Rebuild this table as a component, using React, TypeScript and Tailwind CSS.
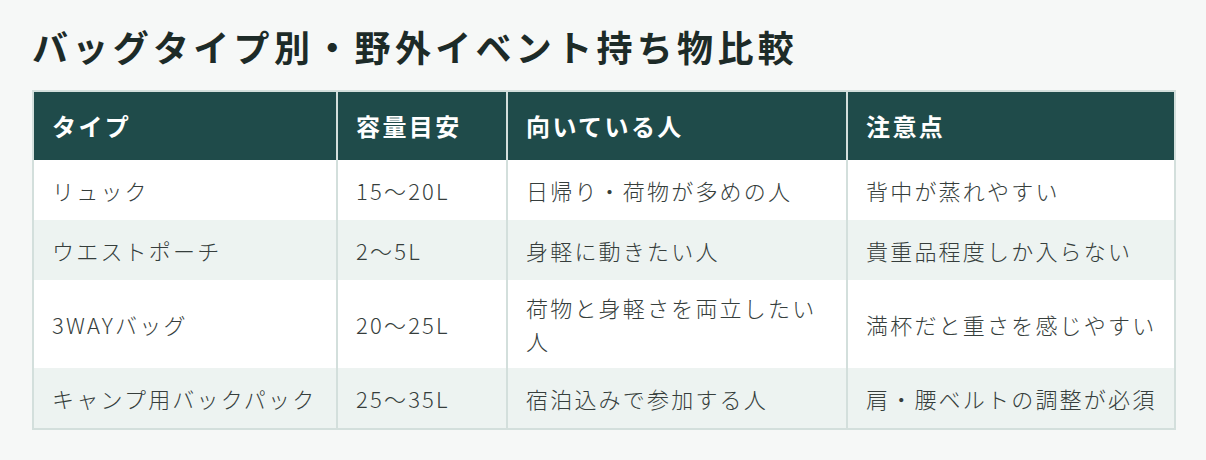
import React from 'react';

interface Row {
  type: string;
  volume: string;
  forWhom: string;
  caution: string;
}

const headers = ['タイプ', '容量目安', '向いている人', '注意点'];

const rows: Row[] = [
  { type: 'リュック', volume: '15〜20L', forWhom: '日帰り・荷物が多めの人', caution: '背中が蒸れやすい' },
  { type: 'ウエストポーチ', volume: '2〜5L', forWhom: '身軽に動きたい人', caution: '貴重品程度しか入らない' },
  { type: '3WAYバッグ', volume: '20〜25L', forWhom: '荷物と身軽さを両立したい人', caution: '満杯だと重さを感じやすい' },
  { type: 'キャンプ用バックパック', volume: '25〜35L', forWhom: '宿泊込みで参加する人', caution: '肩・腰ベルトの調整が必須' },
];

const cols = 'grid grid-cols-[302px_170px_340px_328px]';

const App = () => {
  return (
    <div
      className="min-h-[460px] w-[1206px] bg-[#f6f8f7] px-8 pt-[19px]"
      style={{ fontFamily: '"Noto Sans CJK JP", "Noto Sans", sans-serif' }}
    >
      <h1 className="text-[36px] font-bold leading-[54px] tracking-[0.12em] text-[#1d2b28] whitespace-nowrap">
        バッグタイプ別・野外イベント持ち物比較
      </h1>

      <div className="mt-[17px] w-[1144px] border-2 border-[#d3dfdc]">
        <div className={`${cols} h-[68px] bg-[#1f4b4a]`}>
          {headers.map((h, i) => (
            <div
              key={h}
              className={`flex items-center px-[18px] text-[24px] font-bold tracking-[0.1em] text-white ${i > 0 ? 'border-l-2 border-[#d3dfdc]' : ''}`}
            >
              {h}
            </div>
          ))}
        </div>

        {rows.map((r, idx) => (
          <div
            key={r.type}
            className={`${cols} min-h-[60px] text-[22px] font-light leading-[33px] tracking-[0.1em] text-[#363e3c] ${idx % 2 === 1 ? 'bg-[#edf3f1]' : 'bg-white'}`}
          >
            <div className="flex items-center whitespace-nowrap px-[18px] py-[11px]">{r.type}</div>
            <div className="flex items-center whitespace-nowrap border-l-2 border-[#d3dfdc] px-[18px] py-[11px]">{r.volume}</div>
            <div className="flex items-center border-l-2 border-[#d3dfdc] px-[18px] py-[11px]">{r.forWhom}</div>
            <div className="flex items-center whitespace-nowrap border-l-2 border-[#d3dfdc] px-[18px] py-[11px]">{r.caution}</div>
          </div>
        ))}
      </div>
    </div>
  );
};

export default App;
